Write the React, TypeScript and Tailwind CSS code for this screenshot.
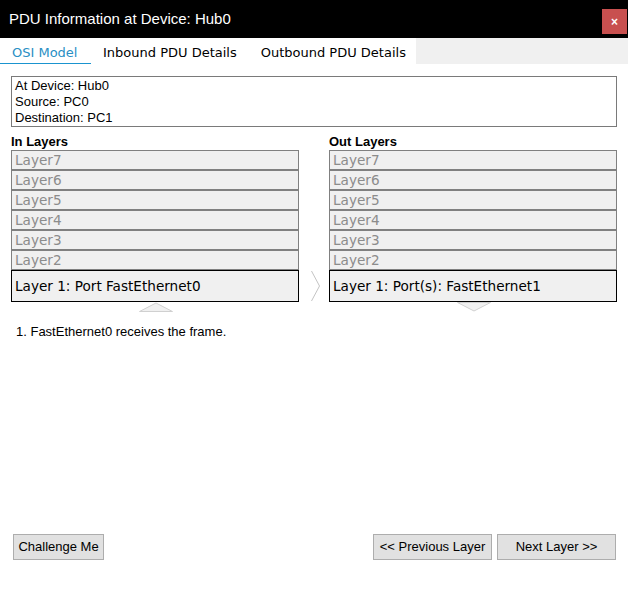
import React from "react";

const layers = ["Layer7", "Layer6", "Layer5", "Layer4", "Layer3", "Layer2"];
const verdana = { fontFamily: "'DejaVu Sans', Verdana, sans-serif" };
const arial = { fontFamily: "Arial, 'Liberation Sans', sans-serif" };

function Column({ title, l1, children }: { title: string; l1: string; children?: React.ReactNode }) {
  return (
    <div className="flex flex-col w-[288px]">
      <div className="h-[20px] text-[13px] font-bold leading-[20px] text-black pt-[2px]" style={arial}>
        {title}
      </div>
      {layers.map((l) => (
        <div
          key={l}
          className="h-[20px] border border-[#808080] bg-[#f0f0f0] pl-[3px] text-[13.6px] leading-[18px] text-[#8c8c8c]"
          style={verdana}
        >
          {l}
        </div>
      ))}
      <div
        className="h-[32px] border border-black bg-[#f0f0f0] pl-[3px] text-[13.6px] leading-[30px] text-black"
        style={verdana}
      >
        {l1}
      </div>
      {children}
    </div>
  );
}

export default function App() {
  return (
    <div className="w-[628px] h-[589px] bg-white flex flex-col relative overflow-hidden">
      <div className="h-[38px] bg-black flex items-center justify-between pl-[9px] pr-[1px]">
        <span className="text-white text-[15px]" style={arial}>
          PDU Information at Device: Hub0
        </span>
        <div className="w-[25px] h-[25px] bg-[#c8504f] flex items-center justify-center text-white text-[12px] font-bold mt-[5px]" style={arial}>
          ×
        </div>
      </div>
      <div className="h-[26px] bg-[#f0f0f0] flex">
        <div className="flex bg-white w-[416px]" style={verdana}>
          <div className="w-[91px] h-full flex flex-col">
            <div className="flex-1 pl-[12px] pt-[5px] text-[13px] text-[#2a8fc4]">OSI Model</div>
            <div className="h-[4px] bg-[#1a94cf]" />
          </div>
          <div className="pl-[12px] pt-[5px] text-[13px] text-black">Inbound PDU Details</div>
          <div className="pl-[24px] pt-[5px] text-[13px] text-black">Outbound PDU Details</div>
        </div>
      </div>
      <div className="px-[11px] pt-[12px] flex flex-col">
        <div className="h-[51px] border border-[#7a7a7a] px-[3px] pt-[1px] text-[13px] leading-[16px] text-black" style={arial}>
          <div>At Device: Hub0</div>
          <div>Source: PC0</div>
          <div>Destination: PC1</div>
        </div>
        <div className="flex mt-[3px]">
          <Column title="In Layers" l1="Layer 1: Port FastEthernet0">
            <div className="flex justify-center pl-[1px]">
              <svg width="34" height="10" viewBox="0 0 34 10">
                <polygon points="0.5,9.5 17,1 33.5,9.5" fill="#f0f0f0" stroke="#d0d0d0" strokeWidth="1" />
              </svg>
            </div>
          </Column>
          <div className="w-[30px] flex flex-col">
            <div className="h-[140px]" />
            <svg width="30" height="32" viewBox="0 0 30 32">
              <polyline points="12.5,1 20.5,16 12.5,31" fill="none" stroke="#c4c4c4" strokeWidth="1" />
            </svg>
          </div>
          <Column title="Out Layers" l1="Layer 1: Port(s): FastEthernet1">
            <div className="flex justify-center pl-[1px]">
              <svg width="34" height="10" viewBox="0 0 34 10">
                <polygon points="0.5,0.5 17,9 33.5,0.5" fill="#f0f0f0" stroke="#d0d0d0" strokeWidth="1" />
              </svg>
            </div>
          </Column>
        </div>
        <div className="pl-[5px] mt-[10px] text-[13px] text-black" style={arial}>
          1. FastEthernet0 receives the frame.
        </div>
      </div>
      <div className="absolute left-0 right-0 top-[534px] flex pl-[13px] pr-[12px] text-[13px] text-black" style={arial}>
        <button className="w-[91px] h-[26px] bg-[#e1e1e1] border border-[#adadad]">Challenge Me</button>
        <div className="flex-1" />
        <button className="w-[119px] h-[26px] bg-[#e1e1e1] border border-[#adadad]">&lt;&lt; Previous Layer</button>
        <button className="w-[119px] h-[26px] bg-[#e1e1e1] border border-[#adadad] ml-[5px]">Next Layer &gt;&gt;</button>
      </div>
    </div>
  );
}
